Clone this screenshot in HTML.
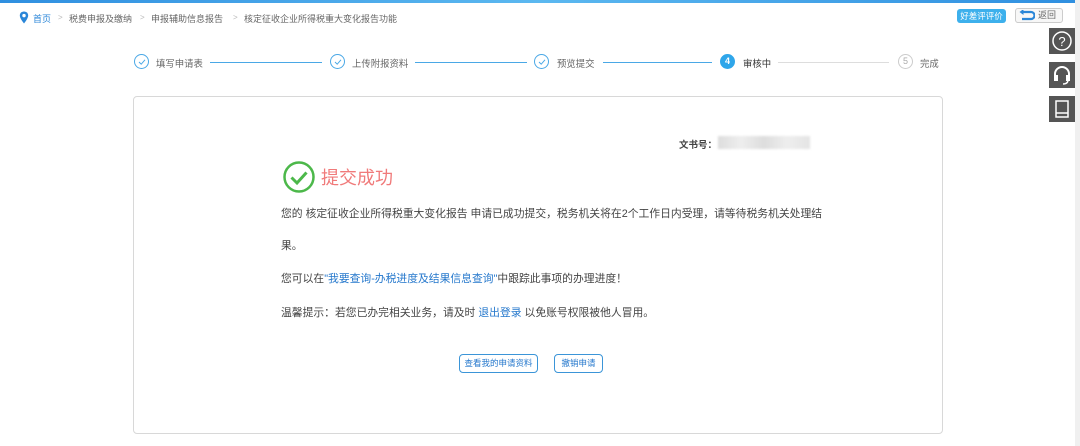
<!DOCTYPE html>
<html><head><meta charset="utf-8"><style>
body{margin:0;width:1080px;height:446px;background:#fff;font-family:"Liberation Sans","Noto Sans CJK SC",sans-serif;position:relative;overflow:hidden;color:#555}
.a{position:absolute;white-space:nowrap}
.topbar{position:absolute;left:0;top:0;width:1080px;height:3px;background:linear-gradient(90deg,#2f8fe0,#5bb8f0,#2f8fe0)}
.bc{top:12px;font-size:9px;color:#666}
.st{font-size:9.4px;color:#666;top:56px}
.c{position:absolute;width:15px;height:15px;border:1px solid #4aa8e6;border-radius:50%;top:54px;box-sizing:border-box}
.c svg{position:absolute;left:3px;top:3px}
.ln{position:absolute;top:62px;height:1px;background:#4aa8e6}
.side{position:absolute;left:1049px;width:26px;height:26px;background:#555}
.card{position:absolute;left:133px;top:96px;width:810px;height:338px;border:1px solid #d8d8d8;border-radius:4px;box-sizing:border-box}
.tx{font-size:10.8px;color:#444}
.lk{color:#2477cc}
.btn{position:absolute;top:354px;height:19px;border:1px solid #3b95d8;border-radius:4px;font-size:8.5px;color:#2477cc;text-align:center;line-height:17px;box-sizing:border-box;white-space:nowrap}
</style></head><body>
<div class="topbar"></div>
<svg class="a" style="left:19px;top:11px" width="10" height="13" viewBox="0 0 10 13"><path d="M5 0.5C2.5 0.5 0.8 2.3 0.8 4.5 0.8 7.5 5 12.5 5 12.5S9.2 7.5 9.2 4.5C9.2 2.3 7.5 0.5 5 0.5Z" fill="#2a86d8"/><circle cx="5" cy="4.6" r="1.7" fill="#fff"/></svg>
<div class="a bc" style="left:33px;color:#2a86d8">首页</div>
<div class="a bc" style="left:58px;color:#bbb;font-size:8px;top:13px">&gt;</div>
<div class="a bc" style="left:69px">税费申报及缴纳</div>
<div class="a bc" style="left:140px;color:#bbb;font-size:8px;top:13px">&gt;</div>
<div class="a bc" style="left:151px">申报辅助信息报告</div>
<div class="a bc" style="left:233px;color:#bbb;font-size:8px;top:13px">&gt;</div>
<div class="a bc" style="left:244px">核定征收企业所得税重大变化报告功能</div>
<div class="a" style="left:957px;top:9px;width:49px;height:14px;background:#3db0ec;border-radius:3px;color:#fff;font-size:8.5px;line-height:14px;text-align:center">好差评评价</div>
<div class="a" style="left:1015px;top:8px;width:48px;height:15px;border:1px solid #ccc;border-radius:3px;box-sizing:border-box;background:#f7f7f7;font-size:9px;color:#666;line-height:13px;padding-left:22px">返回</div>
<svg class="a" style="left:1019px;top:10px" width="16" height="11" viewBox="0 0 16 11"><path d="M4 2H12A3.5 3.5 0 0 1 12 9H3" fill="none" stroke="#2a86d8" stroke-width="2.2"/><path d="M0.5 2 4.5 -1V5Z" fill="#2a86d8"/></svg>
<div class="side" style="top:28px"><svg width="26" height="26"><circle cx="13" cy="13" r="9" fill="none" stroke="#fff" stroke-width="1.5"/><text x="13" y="18" font-size="13" fill="#fff" text-anchor="middle" font-family="Liberation Sans">?</text></svg></div>
<div class="side" style="top:62px"><svg width="26" height="26"><path d="M6 15V12A7 7 0 0 1 20 12V15" fill="none" stroke="#fff" stroke-width="2"/><rect x="5" y="13" width="4" height="6" fill="#fff"/><rect x="17" y="13" width="4" height="6" fill="#fff"/><path d="M19 19Q18 22 14 22" fill="none" stroke="#fff" stroke-width="1.5"/></svg></div>
<div class="side" style="top:96px"><svg width="26" height="26"><rect x="7" y="5" width="12" height="16" fill="none" stroke="#fff" stroke-width="1.5"/><path d="M7 17H19" stroke="#fff" stroke-width="1.5"/></svg></div>
<div class="a" style="left:1075px;top:0;width:5px;height:446px;background:#f0f0f0"></div>

<div class="c" style="left:134px"><svg width="8" height="8"><path d="M1 4 3.2 6.2 7 1.8" fill="none" stroke="#4aa8e6" stroke-width="1"/></svg></div>
<div class="a st" style="left:156px">填写申请表</div>
<div class="ln" style="left:210px;width:112px"></div>
<div class="c" style="left:330px"><svg width="8" height="8"><path d="M1 4 3.2 6.2 7 1.8" fill="none" stroke="#4aa8e6" stroke-width="1"/></svg></div>
<div class="a st" style="left:352px">上传附报资料</div>
<div class="ln" style="left:415px;width:112px"></div>
<div class="c" style="left:534px"><svg width="8" height="8"><path d="M1 4 3.2 6.2 7 1.8" fill="none" stroke="#4aa8e6" stroke-width="1"/></svg></div>
<div class="a st" style="left:557px">预览提交</div>
<div class="ln" style="left:603px;width:109px"></div>
<div class="c" style="left:720px;background:#2fa6ea;border:none;color:#fff;font-size:9px;text-align:center;line-height:15px;font-weight:bold">4</div>
<div class="a st" style="left:743px;color:#333">审核中</div>
<div class="ln" style="left:778px;width:111px;background:#ddd"></div>
<div class="c" style="left:898px;border-color:#ccc;color:#aaa;font-size:9px;text-align:center;line-height:13px">5</div>
<div class="a st" style="left:920px">完成</div>

<div class="card"></div>
<div class="a tx" style="left:679px;top:137px;font-weight:bold;font-size:9.5px">文书号：</div>
<div class="a" style="left:718px;top:136px;width:92px;height:13px;background:linear-gradient(90deg,#ddd,#eee,#ddd,#eee,#e4e4e4);filter:blur(1px)"></div>
<svg class="a" style="left:282px;top:160px" width="34" height="34"><circle cx="17" cy="17" r="14.5" fill="none" stroke="#4cb84a" stroke-width="2.5"/><path d="M9.5 17.5 15 23 24.5 12.5" fill="none" stroke="#4cb84a" stroke-width="3"/></svg>
<div class="a" style="left:321px;top:164px;font-size:18px;color:#f07a7a">提交成功</div>
<div class="a tx" style="left:281px;top:205px">您的 核定征收企业所得税重大变化报告 申请已成功提交，税务机关将在2个工作日内受理，请等待税务机关处理结</div>
<div class="a tx" style="left:281px;top:237px">果。</div>
<div class="a tx" style="left:281px;top:270px">您可以在<span class="lk">"我要查询-办税进度及结果信息查询"</span>中跟踪此事项的办理进度！</div>
<div class="a tx" style="left:281px;top:304px">温馨提示：若您已办完相关业务，请及时 <span class="lk">退出登录</span> 以免账号权限被他人冒用。</div>
<div class="btn" style="left:459px;width:79px">查看我的申请资料</div>
<div class="btn" style="left:554px;width:49px">撤销申请</div>
</body></html>
